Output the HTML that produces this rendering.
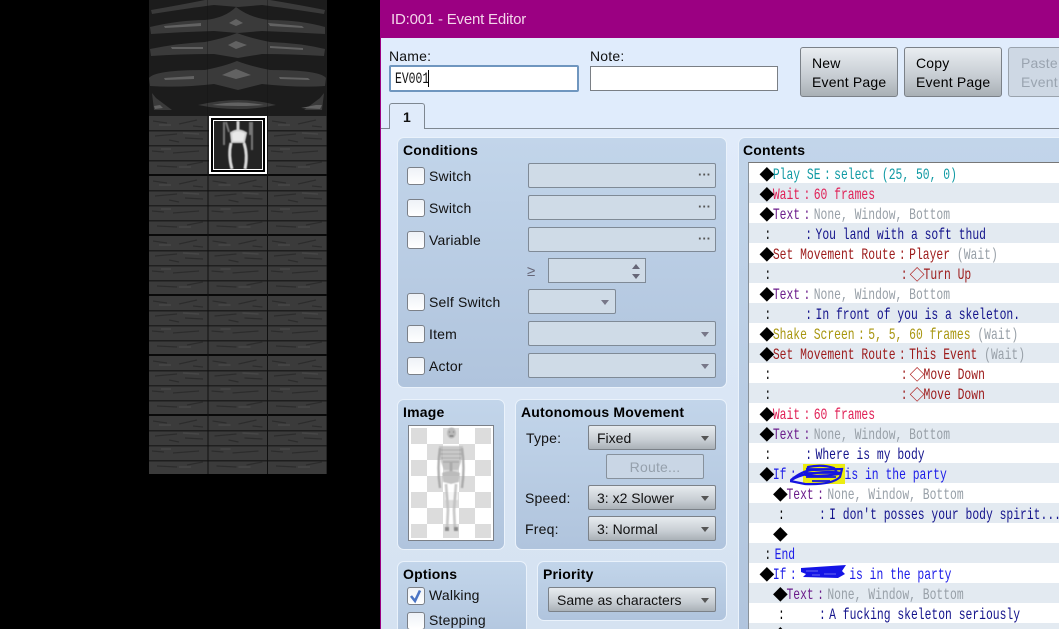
<!DOCTYPE html>
<html><head><meta charset="utf-8"><style>
html,body{margin:0;padding:0;background:#000;width:1059px;height:629px;overflow:hidden}
body{position:relative;font:14px/17px "Liberation Sans",sans-serif;letter-spacing:.2px;color:#111}
.a{position:absolute;box-sizing:border-box}
#dlg{left:380px;top:0;width:679px;height:629px;background:#e0ecfc;overflow:hidden;border-left:1px solid #9b0082}
#dlg>*{margin-left:-381px}
.page{left:381px;top:128px;width:678px;height:501px;background:linear-gradient(#e0ebfa,#d5e2f1);border-top:1px solid #7e8791}
.p{border:1px solid #eaf2fb;border-radius:7px;background:linear-gradient(#c2d5ea,#b0c4dd)}
.t{font-weight:bold;color:#000;margin-top:1px}
.l{white-space:nowrap}
.cb{width:18px;height:18px;border:1px solid #7b8088;border-radius:3px;background:linear-gradient(#eef2f7,#fff)}
.f{background:#cfdbe7;border:1px solid #7f8a96;border-radius:2px}
.c{background:linear-gradient(#e7ebef,#c8ced4 60%,#aab1b7);border:1px solid #7b8188;border-radius:2px;padding:4px 0 0 8px;color:#111;letter-spacing:0}
.ar{width:0;height:0;border:4.5px solid transparent;border-top:5px solid #555;border-bottom:0}
.dt{color:#555;font-size:13px;font-weight:bold;letter-spacing:0;line-height:12px}
.b{background:linear-gradient(#e9edf1,#c6ccd2 60%,#a9b0b5);border:1px solid #7b8188;border-radius:3px;line-height:19px;padding:6px 0 0 11px;white-space:nowrap;color:#000}
#list{left:748px;top:162px;width:311px;height:467px;background:#fff;border-top:1px solid #777;border-left:1px solid #8a929a;overflow:hidden;letter-spacing:0}
.r{position:absolute;left:0;width:311px;height:20px}
.r:nth-child(even){background:#e3eaf1}
.x{position:absolute;left:12px;top:2px;height:20px;white-space:pre;font:16px/20px "Liberation Mono",monospace;transform:scaleX(.71);transform-origin:0 0}
.x i{font-style:normal;display:inline-block;width:2ch;text-align:center;vertical-align:top;height:20px}
.x>i:first-child:not(.d){color:#000}
.x i.d{font:15px/20px "Noto Sans CJK JP",sans-serif;color:#000;transform:scaleX(1.408)}
.x i.o{font:bold 15px/20px "Noto Sans CJK JP",sans-serif;color:#b02424;transform:scaleX(1.408)}
.pu{color:#6a1b8a}.gr{color:#98a0a8}.na{color:#14148c}.te{color:#109aa4}.cr{color:#e01f55}.rd{color:#9c1a1a}.ol{color:#a89610}.bl{color:#1c1ce8}
</style></head><body>

<svg class="a" style="left:149px;top:0" width="179" height="475" viewBox="149 0 179 475">
<defs>
<pattern id="w" x="149" y="116" width="59.5" height="60" patternUnits="userSpaceOnUse">
<rect width="60" height="60" fill="#3b3b3b"/>
<rect x="0" y="14" width="60" height="1.500" fill="#1e1e1e"/>
<rect x="0" y="29" width="60" height="1.500" fill="#202020"/>
<rect x="0" y="44" width="60" height="1.500" fill="#1e1e1e"/>
<rect x="0" y="58" width="60" height="2" fill="#0a0a0a"/>
<rect x="58.500" y="0" width="1" height="60" fill="#101010"/>
<path d="M4 5l14 2M30 8l18-4M6 20l22-2M36 22l18 1M3 35l12 1M24 37l26-2M8 50l20 1M38 49l16-3M44 10l10 1M20 24l10 2" stroke="#2c2c2c" stroke-width="1.300" fill="none"/>
<path d="M10 9l12 0M34 17l16 1M12 33l10 0M30 51l12 0" stroke="#474747" stroke-width="1.500" fill="none"/>
</pattern>
<filter id="bl2"><feGaussianBlur stdDeviation=".6"/></filter>
</defs>
<rect x="149" y="0" width="178" height="116" fill="#1c1c1c"/>
<g fill="#3a3a3a">
<path d="M151 10Q180 5 205 0H270Q300 5 325 10L324 14Q285 8 262 5L238 7 214 5Q190 8 152 14Z"/>
<path d="M150 27Q180 20 205 20Q225 18 236 7Q250 18 270 20Q300 20 325 27V34Q290 32 262 31L238 33 214 31Q180 32 151 34Z"/>
<path d="M150 49Q180 43 205 42Q225 38 237 33Q250 38 270 42Q300 43 325 49L324 56Q290 54 262 54L238 58 214 54Q180 54 151 56Z"/>
<path d="M149 78Q155 70 205 70Q225 66 237 61Q250 66 270 70Q320 70 326 78L325 86Q300 88 262 84L238 90 214 84Q180 88 150 86Z"/>
<path d="M152 93L154 110H172L156 98ZM324 93L322 110H304L320 98ZM198 105Q220 100 238 100Q258 100 276 105Q258 109 238 109Q218 109 198 105Z"/>
</g>
<g fill="#626262">
<path d="M164 26L201 23V26L165 28ZM268 23L302 26L304 28L270 26ZM229 23L236 19L243 23L236 26Z"/>
<path d="M171 47H203V49H172ZM270 46L303 48V50L270 48ZM228 45L236 41L247 45L236 49Z"/>
<path d="M164 78L194 76V79L165 80ZM279 77L308 78L310 80L280 79ZM222 75L236 69L251 75L236 79Z"/>
<path d="M212 105Q238 100 264 105Q238 107 212 105ZM154 106L160 105L163 108L155 109ZM322 105L316 105L301 108L320 109Z"/>
</g>
<rect x="149" y="116" width="178" height="358" fill="url(#w)"/>
<rect x="207" y="0" width="1" height="116" fill="#141414" opacity=".4"/><rect x="267" y="0" width="1" height="116" fill="#141414" opacity=".4"/>
<rect x="210.500" y="117.500" width="55" height="55" fill="#222" stroke="#fff" stroke-width="3"/>
<rect x="212" y="119" width="52" height="52" fill="none" stroke="#000" stroke-width="2"/>
<rect x="213.500" y="120.500" width="49" height="49" fill="#242424" stroke="#fff" stroke-width="1"/>
<g filter="url(#bl2)" fill="none" stroke="#d0d0d0">
<path d="M224 122V145M226 122L229 132M252 122V150M250 122V135" stroke="#777" stroke-width="2"/>
<path d="M238 121V133" stroke-width="3"/>
<path d="M231 133Q238 128 246 133L244 142H232Z" fill="#e8e8e8" stroke-width="2"/>
<path d="M231 143Q228 155 232 169M244 143Q248 155 245 169" stroke-width="3" stroke="#d8d8d8"/>
</g>
</svg>

<div class="a" id="dlg">
<div class="a" style="left:381px;top:0;width:678px;height:38px;background:#9b0082"></div>
<div class="a l" style="left:391px;top:10px;font-size:15px;line-height:20px;color:#f3d5ea;letter-spacing:-.2px;margin:0 0 0 -381px">ID:001 - Event Editor</div>

<div class="a l" style="left:389px;top:48px">Name:</div>
<div class="a" style="left:389px;top:65px;width:190px;height:27px;background:#fff;border:2px solid #6f96bf;border-radius:2px;font:16px/23px 'Liberation Mono',monospace;padding-left:4px;letter-spacing:0"><span style="display:inline-block;transform:scaleX(.7125);transform-origin:0 0;line-height:18px;vertical-align:top;margin-top:3px">EV001</span><span class="a" style="left:37px;top:3px;width:1px;height:17px;background:#000"></span></div>
<div class="a l" style="left:590px;top:48px">Note:</div>
<div class="a" style="left:590px;top:66px;width:188px;height:25px;background:#fff;border:1px solid #7a7f85"></div>

<div class="a b" style="left:800px;top:47px;width:98px;height:50px">New<br>Event Page</div>
<div class="a b" style="left:904px;top:47px;width:98px;height:50px">Copy<br>Event Page</div>
<div class="a b" style="left:1008px;top:47px;width:98px;height:50px;background:#ced8e4;border-color:#9aa3ad;color:#9aa4b0;padding-left:12px">Paste<br>Event Page</div>

<div class="page a"></div>
<div class="a" style="left:389px;top:103px;width:36px;height:26px;background:#e0ebfa;border:1px solid #7e8791;border-bottom:0;border-radius:3px 3px 0 0;text-align:center;font-weight:bold;line-height:26px">1</div>

<div class="a p" style="left:397px;top:137px;width:330px;height:251px"></div>
<div class="a l t" style="left:403px;top:141px">Conditions</div>

<div class="a cb" style="left:407px;top:167px"></div><div class="a l" style="left:429px;top:168px">Switch</div>
<div class="a f" style="left:528px;top:163px;width:188px;height:25px"></div><div class="a dt" style="left:698px;top:169px">···</div>
<div class="a cb" style="left:407px;top:199px"></div><div class="a l" style="left:429px;top:200px">Switch</div>
<div class="a f" style="left:528px;top:195px;width:188px;height:25px"></div><div class="a dt" style="left:698px;top:201px">···</div>
<div class="a cb" style="left:407px;top:231px"></div><div class="a l" style="left:429px;top:232px">Variable</div>
<div class="a f" style="left:528px;top:227px;width:188px;height:25px"></div><div class="a dt" style="left:698px;top:233px">···</div>
<div class="a l" style="left:527px;top:263px;color:#667;font-size:15px">≥</div>
<div class="a f" style="left:548px;top:258px;width:98px;height:25px;border-radius:0"></div>
<div class="a" style="left:632px;top:264px;width:0;height:0;border:4px solid transparent;border-bottom:5px solid #667;border-top:0"></div>
<div class="a" style="left:632px;top:274px;width:0;height:0;border:4px solid transparent;border-top:5px solid #667;border-bottom:0"></div>
<div class="a cb" style="left:407px;top:293px"></div><div class="a l" style="left:429px;top:294px">Self Switch</div>
<div class="a f" style="left:528px;top:289px;width:88px;height:25px"></div><div class="a ar" style="left:601px;top:300px;border-top-color:#778"></div>
<div class="a cb" style="left:407px;top:325px"></div><div class="a l" style="left:429px;top:326px">Item</div>
<div class="a f" style="left:528px;top:321px;width:188px;height:25px"></div><div class="a ar" style="left:701px;top:332px;border-top-color:#778"></div>
<div class="a cb" style="left:407px;top:357px"></div><div class="a l" style="left:429px;top:358px">Actor</div>
<div class="a f" style="left:528px;top:353px;width:188px;height:25px"></div><div class="a ar" style="left:701px;top:364px;border-top-color:#778"></div>

<div class="a p" style="left:397px;top:399px;width:108px;height:151px"></div>
<div class="a l t" style="left:403px;top:403px">Image</div>
<svg class="a" style="left:408px;top:425px" width="86" height="116" viewBox="408 425 86 116">
<rect x="408.500" y="425.500" width="85" height="115" fill="#fff" stroke="#7b8088"/>
<g fill="#dcdcdc">
<rect x="411" y="428" width="16" height="16"/><rect x="443" y="428" width="16" height="16"/><rect x="475" y="428" width="16" height="16"/>
<rect x="427" y="444" width="16" height="16"/><rect x="459" y="444" width="16" height="16"/>
<rect x="411" y="460" width="16" height="16"/><rect x="443" y="460" width="16" height="16"/><rect x="475" y="460" width="16" height="16"/>
<rect x="427" y="476" width="16" height="16"/><rect x="459" y="476" width="16" height="16"/>
<rect x="411" y="492" width="16" height="16"/><rect x="443" y="492" width="16" height="16"/><rect x="475" y="492" width="16" height="16"/>
<rect x="427" y="508" width="16" height="16"/><rect x="459" y="508" width="16" height="16"/>
<rect x="411" y="524" width="16" height="14"/><rect x="443" y="524" width="16" height="14"/><rect x="475" y="524" width="16" height="14"/>
</g>
<g filter="url(#bl2)" opacity=".8">
<path d="M445 483H458V500H445Z" fill="#fff"/>
<path d="M439 446H463L461 462 458 470H444L441 462Z" fill="#bcbcbc"/>
<path d="M441 450H461M440 454H462M441 458H461M443 462H459" stroke="#949494" fill="none"/>
<path d="M451 462V472" stroke="#a0a0a0" stroke-width="3"/>
<path d="M442 473Q451 469 460 473L459 482 451 484 443 482Z" fill="#b4b4b4"/>
<path d="M440 448Q437 468 440 488M462 448Q465 468 462 488" stroke="#a0a0a0" stroke-width="2.500" fill="none"/>
<path d="M446 484L448 510 447 530M456 484L454 510 455 530" stroke="#bdbdbd" stroke-width="2.800" fill="none"/>
<ellipse cx="451.500" cy="433" rx="4.500" ry="5.500" fill="#b0b0b0"/>
<path d="M449 432h1M453 432h1M449.500 436h4" stroke="#444" stroke-width="1.300"/>
<path d="M445 527h4v4h-4zM454 527h4v4h-4z" fill="#777"/>
</g>
</svg>

<div class="a p" style="left:515px;top:399px;width:212px;height:151px"></div>
<div class="a l t" style="left:521px;top:403px">Autonomous Movement</div>
<div class="a l" style="left:526px;top:430px">Type:</div>
<div class="a c" style="left:588px;top:425px;width:128px;height:25px">Fixed</div><div class="a ar" style="left:701px;top:436px"></div>
<div class="a" style="left:606px;top:454px;width:98px;height:25px;background:#c9d6e5;border:1px solid #87919c;border-radius:2px;text-align:center;color:#95a0ac;line-height:24px">Route...</div>
<div class="a l" style="left:525px;top:490px">Speed:</div>
<div class="a c" style="left:588px;top:485px;width:128px;height:25px">3: x2 Slower</div><div class="a ar" style="left:701px;top:496px"></div>
<div class="a l" style="left:525px;top:521px">Freq:</div>
<div class="a c" style="left:588px;top:516px;width:128px;height:25px">3: Normal</div><div class="a ar" style="left:701px;top:527px"></div>

<div class="a p" style="left:397px;top:561px;width:130px;height:90px"></div>
<div class="a l t" style="left:403px;top:565px">Options</div>
<div class="a cb" style="left:407px;top:587px"></div>
<svg class="a" style="left:407px;top:587px" width="18" height="18" viewBox="0 0 18 18"><path d="M4 9L8 14L13 3.500" fill="none" stroke="#4a74c4" stroke-width="2.600"/></svg>
<div class="a l" style="left:429px;top:587px">Walking</div>
<div class="a cb" style="left:407px;top:612px"></div><div class="a l" style="left:429px;top:612px">Stepping</div>

<div class="a p" style="left:537px;top:561px;width:190px;height:60px"></div>
<div class="a l t" style="left:543px;top:565px">Priority</div>
<div class="a c" style="left:548px;top:587px;width:168px;height:25px">Same as characters</div><div class="a ar" style="left:701px;top:598px"></div>

<div class="a p" style="left:738px;top:137px;width:340px;height:510px"></div>
<div class="a l t" style="left:743px;top:141px">Contents</div>

<div class="a" id="list">
<div class="r" style="top:0"><div class="x te"><i class="d">◆</i>Play SE<i>:</i>select (25, 50, 0)</div></div>
<div class="r" style="top:20px"><div class="x cr"><i class="d">◆</i>Wait<i>:</i>60 frames</div></div>
<div class="r" style="top:40px"><div class="x pu"><i class="d">◆</i>Text<i>:</i><span class="gr">None, Window, Bottom</span></div></div>
<div class="r" style="top:60px"><div class="x na"><i>:</i>    <i>:</i>You land with a soft thud</div></div>
<div class="r" style="top:80px"><div class="x rd"><i class="d">◆</i>Set Movement Route<i>:</i>Player <span class="gr">(Wait)</span></div></div>
<div class="r" style="top:100px"><div class="x rd"><i>:</i>                  <i>:</i><i class="o">◇</i>Turn Up</div></div>
<div class="r" style="top:120px"><div class="x pu"><i class="d">◆</i>Text<i>:</i><span class="gr">None, Window, Bottom</span></div></div>
<div class="r" style="top:140px"><div class="x na"><i>:</i>    <i>:</i>In front of you is a skeleton.</div></div>
<div class="r" style="top:160px"><div class="x ol"><i class="d">◆</i>Shake Screen<i>:</i>5, 5, 60 frames <span class="gr">(Wait)</span></div></div>
<div class="r" style="top:180px"><div class="x rd"><i class="d">◆</i>Set Movement Route<i>:</i>This Event <span class="gr">(Wait)</span></div></div>
<div class="r" style="top:200px"><div class="x rd"><i>:</i>                  <i>:</i><i class="o">◇</i>Move Down</div></div>
<div class="r" style="top:220px"><div class="x rd"><i>:</i>                  <i>:</i><i class="o">◇</i>Move Down</div></div>
<div class="r" style="top:240px"><div class="x cr"><i class="d">◆</i>Wait<i>:</i>60 frames</div></div>
<div class="r" style="top:260px"><div class="x pu"><i class="d">◆</i>Text<i>:</i><span class="gr">None, Window, Bottom</span></div></div>
<div class="r" style="top:280px"><div class="x na"><i>:</i>    <i>:</i>Where is my body</div></div>
<div class="r" style="top:300px"><div class="x bl"><i class="d">◆</i>If<i>:</i>      <span style="margin-left:5px">is in the party</span></div></div>
<div class="r" style="top:320px"><div class="x pu">  <i class="d">◆</i>Text<i>:</i><span class="gr">None, Window, Bottom</span></div></div>
<div class="r" style="top:340px"><div class="x na">  <i>:</i>    <i>:</i>I don't posses your body spirit...</div></div>
<div class="r" style="top:360px"><div class="x">  <i class="d">◆</i></div></div>
<div class="r" style="top:380px"><div class="x bl"><i>:</i>End</div></div>
<div class="r" style="top:400px"><div class="x bl"><i class="d">◆</i>If<i>:</i>       <span style="margin-left:2px">is in the party</span></div></div>
<div class="r" style="top:420px"><div class="x pu">  <i class="d">◆</i>Text<i>:</i><span class="gr">None, Window, Bottom</span></div></div>
<div class="r" style="top:440px"><div class="x na">  <i>:</i>    <i>:</i>A fucking skeleton seriously</div></div>
<div class="r" style="top:460px"><div class="x">  <i class="d">◆</i></div></div>
</div>

<svg class="a" style="left:790px;top:460px" width="70" height="125" viewBox="790 460 70 125">
<rect x="803" y="464" width="42" height="20" fill="#ecec10"/>
<path d="M791 480Q802 471 812 470L842 469L840 477Q832 485 805 484L790 481Q800 474 815 473Q830 471 841 473M808 467Q822 464 834 468L838 474Q820 477 806 475Z" fill="none" stroke="#1414e0" stroke-width="2.200"/>
<path d="M806 469H838M804 473H838M806 477H836M812 481H830" stroke="#1414e0" stroke-width="1.800" fill="none"/>
<path d="M801 568L846 565L842 571L845 574L838 578L803 577L806 574L801 572Z" fill="#1414e6"/>
<path d="M806 571H818M824 574H836M812 575H820" stroke="#6a6af0" stroke-width="1" fill="none"/>
</svg>
</div>
</body></html>
